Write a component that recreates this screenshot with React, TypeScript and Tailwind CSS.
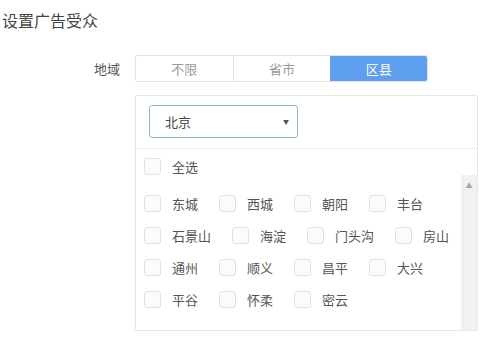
const rows: string[][] = [
  ['东城', '西城', '朝阳', '丰台'],
  ['石景山', '海淀', '门头沟', '房山'],
  ['通州', '顺义', '昌平', '大兴'],
  ['平谷', '怀柔', '密云'],
];

function Box() {
  return <span className="block w-[17px] h-[17px] shrink-0 rounded-[3px] border border-[#e2e2e2] bg-[#fbfbfb]" />;
}

function Tabs() {
  const items = ['不限', '省市', '区县'];
  return (
    <div className="flex w-[293px] h-[27px] rounded-[3px] border border-[#e3e3e3] overflow-hidden">
      {items.map((t, i) => (
        <div
          key={t}
          className={`flex-1 flex items-center justify-center text-[13px] ${
            i === 2 ? 'bg-[#5ea0ef] text-white' : 'text-[#9a9a9a]'
          } ${i === 0 ? 'border-r border-[#e3e3e3]' : ''}`}
        >
          {t}
        </div>
      ))}
    </div>
  );
}

export default function App() {
  return (
    <div className="w-[491px] h-[343px] bg-white overflow-hidden text-[#555] font-['Noto_Sans_CJK_SC',sans-serif]">
      <div className="pt-[10px] pl-[2px] text-[16px] leading-[20px] text-[#444]">设置广告受众</div>
      <div className="flex mt-[25px]">
        <div className="w-[120px] text-right text-[13px] h-[27px] leading-[27px]">地域</div>
        <div className="ml-[15px]">
          <Tabs />
          <div className="mt-[13px] w-[343px] h-[236px] border border-[#e6e6e6] rounded-[2px] flex flex-col">
            <div className="pt-[9px] pb-[10px] pl-[13px] border-b border-[#ececec]">
              <div className="w-[149px] h-[33px] rounded-[3px] border border-[#8fbcc7] flex items-center justify-between pl-[15px] pr-[8px] text-[13px] text-[#444]">
                <span>北京</span>
                <span className="text-[6px] text-[#555]">▼</span>
              </div>
            </div>
            <div className="h-[26px] pt-[9px] pl-[8px] flex items-start">
              <Box />
              <span className="ml-[11px] text-[13px] leading-[17px]">全选</span>
            </div>
            <div className="flex-1 flex min-h-0">
              <div className="flex-1 min-w-0 pt-[12px] pl-[8px]">
                {rows.map((r, i) => (
                  <div key={i} className="flex items-center h-[32px] whitespace-nowrap">
                    {r.map((t) => (
                      <div key={t} className="flex items-center shrink-0 mr-[21px]">
                        <Box />
                        <span className="ml-[11px] text-[13px] leading-[17px]">{t}</span>
                      </div>
                    ))}
                  </div>
                ))}
              </div>
              <div className="w-[16px] shrink-0 bg-[#f1f1f1] flex justify-center pt-[7px]">
                <span className="text-[7px] leading-[7px] text-[#a6a6a6]">▲</span>
              </div>
            </div>
          </div>
        </div>
      </div>
    </div>
  );
}
